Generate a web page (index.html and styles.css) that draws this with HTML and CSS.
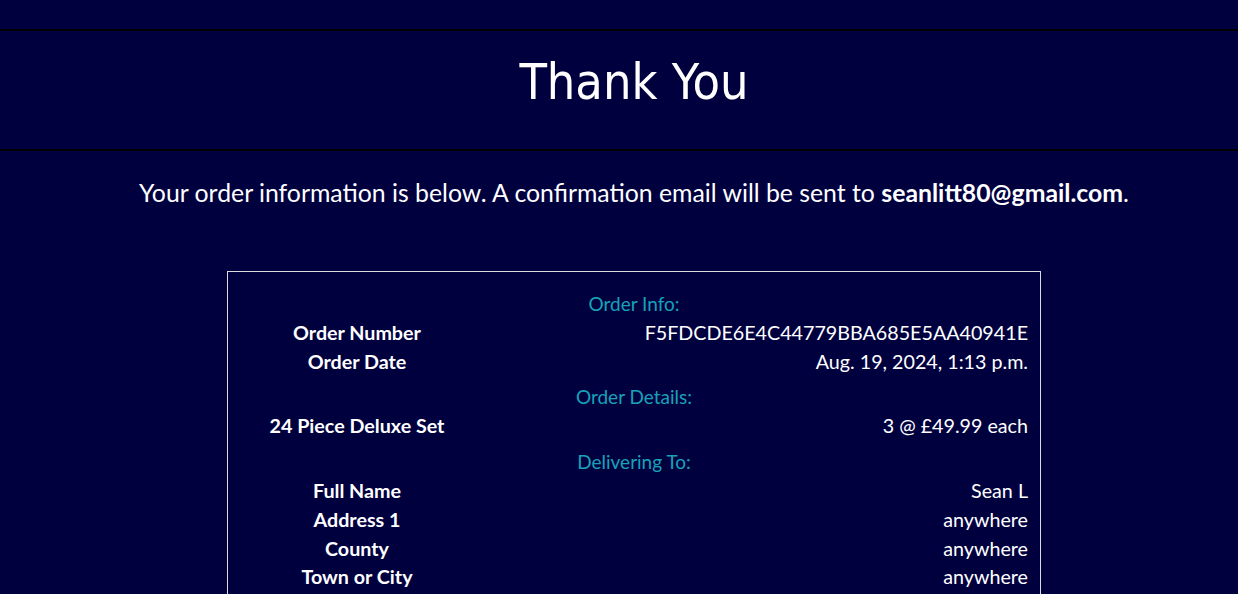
FILE: index.html
```html
<!DOCTYPE html>
<html lang="en">
<head>
<meta charset="utf-8">
<title>Thank You</title>
<link rel="stylesheet" href="styles.css">
</head>
<body>
<div class="topbar"></div>
<header class="hero">
  <h1 class="hero-title">Thank You</h1>
</header>
<main class="page">
  <p class="intro">Your order information is below. A confirmation email will be sent to <strong>seanlitt80@gmail.com</strong>.</p>
  <section class="order-box">
    <div class="section">
      <h2 class="section-title">Order Info:</h2>
      <div class="row"><span class="label">Order Number</span><span class="value">F5FDCDE6E4C44779BBA685E5AA40941E</span></div>
      <div class="row"><span class="label">Order Date</span><span class="value">Aug. 19, 2024, 1:13 p.m.</span></div>
    </div>
    <div class="section">
      <h2 class="section-title">Order Details:</h2>
      <div class="row"><span class="label">24 Piece Deluxe Set</span><span class="value">3 @ £49.99 each</span></div>
    </div>
    <div class="section">
      <h2 class="section-title">Delivering To:</h2>
      <div class="row"><span class="label">Full Name</span><span class="value">Sean L</span></div>
      <div class="row"><span class="label">Address 1</span><span class="value">anywhere</span></div>
      <div class="row"><span class="label">County</span><span class="value">anywhere</span></div>
      <div class="row"><span class="label">Town or City</span><span class="value">anywhere</span></div>
    </div>
  </section>
</main>
</body>
</html>
```
FILE: styles.css
```css
html, body {
  margin: 0;
  padding: 0;
  background: #00003f;
  color: #ffffff;
  font-family: "Lato", "Noto Sans", sans-serif;
}
.topbar {
  height: 29px;
  border-bottom: 2px solid #000000;
}
.hero {
  height: 120px;
  box-sizing: border-box;
  padding: 0 0 16px 30px;
  border-bottom: 2px solid #000000;
  display: flex;
  align-items: center;
  justify-content: center;
}
.hero-title {
  margin: 0;
  font-family: "DejaVu Sans Condensed", "Open Sans", sans-serif;
  font-weight: 400;
  font-size: 50px;
  line-height: 1;
}
.page {
  padding-left: 30px;
  display: flex;
  flex-direction: column;
  align-items: center;
}
.intro {
  margin: 27px 0 0;
  font-size: 24.8px;
  line-height: 30px;
  text-align: center;
}
.intro strong { font-weight: 700; }
.order-box {
  margin-top: 63px;
  width: 788px;
  padding: 17px 12px 4px;
  border: 1px solid #dcdcdc;
  display: flex;
  flex-direction: column;
  gap: 6px;
}
.section-title {
  margin: 0;
  font-size: 19px;
  font-weight: 400;
  line-height: 30px;
  color: #17a2b8;
  text-align: center;
}
.row {
  display: grid;
  grid-template-columns: 234px 1fr;
  font-size: 19.7px;
  line-height: 28.7px;
}
.label {
  font-weight: 700;
  text-align: center;
}
.value {
  text-align: right;
}
```
